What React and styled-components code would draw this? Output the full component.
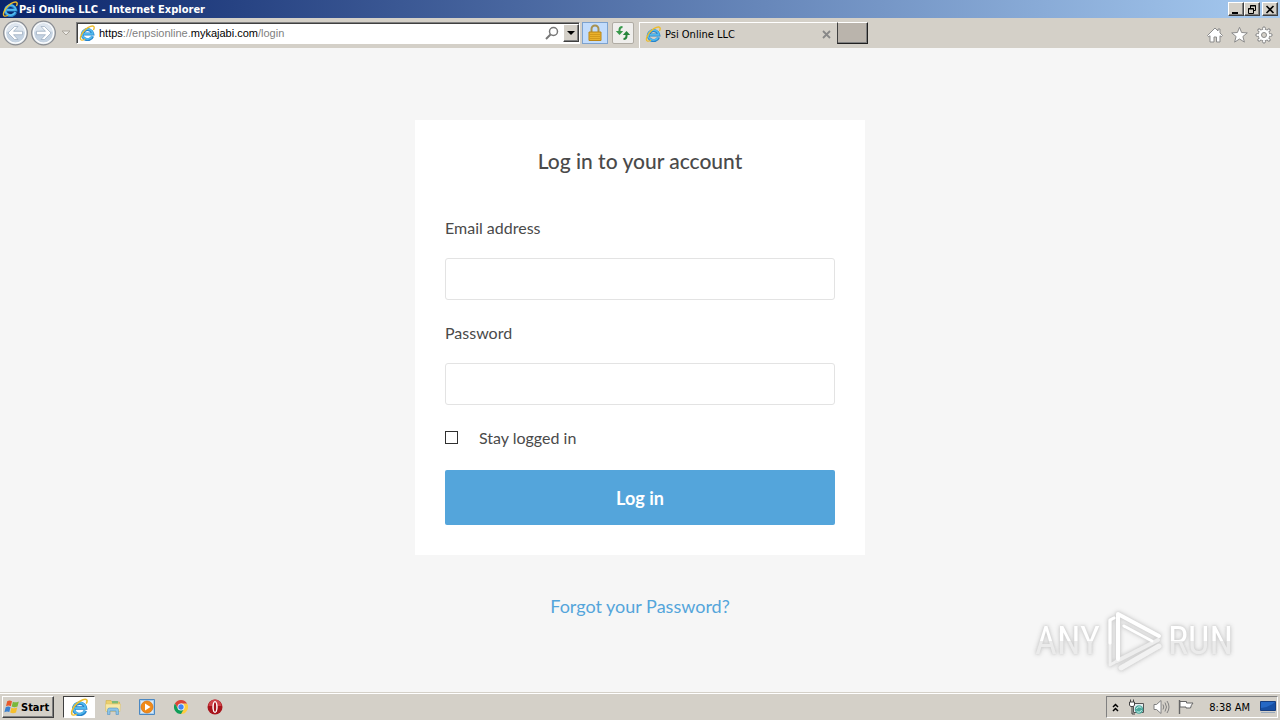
import React, { useState } from 'react';
import styled, { createGlobalStyle, css } from 'styled-components';


const GlobalStyle = createGlobalStyle`
  :root {
    --face: #d4d0c8;
    --shadow: #808080;
    --dark: #404040;
    --page: #f6f6f6;
    --text: #4a4a4a;
    --accent: #54a5db;
  }

  * {
    box-sizing: border-box;
  }

  body {
    margin: 0;
    font-family: 'DejaVu Sans Condensed', 'DejaVu Sans', sans-serif;
    font-size: 11px;
    color: #000;
  }

  button {
    font: inherit;
    color: inherit;
    padding: 0;
  }

  svg {
    display: block;
    flex: none;
  }
`

const raised = css`
  border: 1px solid;
  border-color: #fff var(--dark) var(--dark) #fff;
  box-shadow: inset -1px -1px 0 var(--shadow);
  background: var(--face);
`

const Screen = styled.div`
  min-height: 100vh;
  display: flex;
  flex-direction: column;
`

/* ---------- Window chrome ---------- */

const TitleBar = styled.header`
  height: 18px;
  padding: 0 2px;
  display: flex;
  align-items: center;
  gap: 1px;
  background: linear-gradient(90deg, #0a246a, #a6caf0);
  color: #fff;
  font-weight: bold;
`

const WindowButtons = styled.div`
  margin-left: auto;
  display: flex;

  button:last-child {
    margin-left: 2px;
  }
`

const WindowButton = styled.button`
  ${raised}
  width: 16px;
  height: 14px;
  display: flex;
  align-items: center;
  justify-content: center;
`

const Toolbar = styled.div`
  height: 30px;
  padding: 0 7px 0 3px;
  display: flex;
  align-items: center;
  background: var(--face);
`

const PlainButton = styled.button`
  border: 0;
  background: none;
  display: flex;
  align-items: center;
  justify-content: center;
`

const NavButtons = styled.div`
  display: flex;
  align-items: center;
  gap: 3px;
  margin-right: 3px;
`

const AddressBar = styled.div`
  flex: 0 1 504px;
  min-width: 0;
  height: 22px;
  padding: 1px 0 1px 2px;
  display: flex;
  align-items: center;
  gap: 4px;
  background: #fff;
  border: 1px solid;
  border-color: var(--shadow) #fff #fff var(--shadow);
  box-shadow: inset 1px 1px 0 var(--dark);
`

const Url = styled.div`
  flex: 1;
  overflow: hidden;
  font-family: 'Liberation Sans', sans-serif;
  line-height: 16px;
  white-space: nowrap;
  color: #808080;

  b {
    font-weight: normal;
    color: #000;
  }
`

const DropButton = styled.button`
  ${raised}
  width: 16px;
  height: 18px;
  display: flex;
  align-items: center;
  justify-content: center;
`

const SmallButton = styled.button`
  width: ${(props) => (props.$active ? '26px' : '22px')};
  height: 22px;
  margin-left: ${(props) => (props.$active ? '2px' : '4px')};
  border: 1px solid ${(props) => (props.$active ? '#7da2ce' : '#b0aca4')};
  border-radius: ${(props) => (props.$active ? '0' : '2px')};
  background: ${(props) => (props.$active ? '#c2dcfc' : '#efeeec')};
  display: flex;
  align-items: center;
  justify-content: center;
`

const Tab = styled.div`
  align-self: flex-end;
  width: 198px;
  height: 26px;
  margin-left: 5px;
  padding: 0 6px 3px 5px;
  display: flex;
  align-items: center;
  gap: 4px;
  border: solid #fff;
  border-width: 1px 0 0 1px;

  button {
    margin-left: auto;
  }
`

const NewTab = styled.button`
  width: 31px;
  height: 22px;
  border: 1px solid;
  border-color: #fff #202020 #202020 #404040;
  box-shadow: inset -1px -1px 0 var(--shadow);
  background: #bab4ac;
`

const Tools = styled.div`
  margin-left: auto;
  padding-top: 3px;
  display: flex;
  gap: 6px;
`

/* ---------- Login page ---------- */

const Page = styled.main`
  position: relative;
  flex: 1;
  padding: 72px 20px 40px;
  display: flex;
  flex-direction: column;
  align-items: center;
  background: var(--page);
  font-family: Lato, sans-serif;
  font-size: 16px;
  line-height: 24px;
  color: var(--text);
`

const Card = styled.form`
  width: 100%;
  max-width: 450px;
  padding: 29px 30px 30px;
  background: #fff;
`

const Heading = styled.h1`
  margin: 0 0 43px;
  font-size: 21px;
  font-weight: 500;
  line-height: 24px;
  text-align: center;
`

const Field = styled.div`
  margin-bottom: 21px;

  label {
    display: block;
    margin-bottom: 18px;
  }

  input {
    display: block;
    width: 100%;
    height: 42px;
    padding: 0 12px;
    border: 1px solid #e3e3e3;
    border-radius: 3px;
    font: inherit;
    color: inherit;
    background: #fff;
  }
`

const CheckRow = styled.label`
  margin-bottom: 20px;
  display: flex;
  align-items: center;
  gap: 21px;

  input {
    appearance: none;
    width: 13px;
    height: 13px;
    margin: 0 0 2px;
    border: 1px solid #303030;
    background: #fff;
  }

  input:checked {
    background: var(--accent);
  }
`

const Submit = styled.button`
  display: block;
  width: 100%;
  height: 55px;
  border: 0;
  border-radius: 2px;
  background: var(--accent);
  color: #fff;
  font-size: 18px;
  font-weight: bold;
`

const ForgotLink = styled.a`
  margin-top: 39px;
  font-size: 18px;
  color: var(--accent);
  text-decoration: none;
`

// Sits over the page in the corner
const Watermark = styled.div`
  position: absolute;
  right: 47px;
  bottom: 19px;
  display: flex;
  align-items: center;
  gap: 5px;
  font-family: 'Liberation Sans Narrow', 'Roboto Condensed', sans-serif;
  font-size: 38px;
  line-height: 64px;
  pointer-events: none;
  filter: drop-shadow(0 0 1px #d2d2d2) drop-shadow(0 0 2px #c8c8c8);

  span {
    color: transparent;
    background: linear-gradient(#fff 50%, #ebebeb 50%);
    background-clip: text;
  }
`

/* ---------- Taskbar ---------- */

const Taskbar = styled.footer`
  height: 28px;
  padding: 1px 2px 0;
  display: flex;
  align-items: center;
  background: var(--face);
  border-top: 1px solid var(--face);
  box-shadow: inset 0 1px 0 #fff;
`

const StartButton = styled.button`
  ${raised}
  height: 22px;
  padding: 0 4px 0 1px;
  display: flex;
  align-items: center;
  gap: 1px;
  font-weight: bold;
`

const TaskButton = styled.button`
  width: ${(props) => (props.$pressed ? '32px' : '34px')};
  height: 22px;
  display: flex;
  align-items: center;
  justify-content: center;
  border: 1px solid transparent;
  background: none;

  ${(props) => props.$pressed && css`
    margin: 0 1px 0 9px;
    background: #fff;
    border-color: var(--dark) #fff #fff var(--dark);
  `}
`

const Tray = styled.div`
  height: 22px;
  margin-left: auto;
  padding: 0 1px 0 4px;
  display: flex;
  align-items: center;
  gap: 8px;
  border: 1px solid;
  border-color: var(--shadow) #fff #fff var(--shadow);

  time {
    margin: 0 2px 0 7px;
  }
`

/* ---------- Icons ---------- */

const IeIcon = ({ size = 16 }) => (
  <svg width={size} height={size} viewBox="0 0 16 16" fill="none">
    <path d="M13.600 11.200A5.300 5 0 1 1 13.800 8.900H4.500" stroke="#2583cb" strokeWidth="3" />
    <path d="M13.300 11.200A5.300 5 0 1 1 13.800 8.900H4.500" stroke="#52b9ee" strokeWidth="1.700" />
    <path d="M2.200 15C.3 13.500 2.300 8.500 6.200 4.800C9.800 1.500 13.800.2 14.900 1.700C15.500 2.700 15 4 14.400 5" stroke="#ecbc2c" strokeWidth="1.400" />
    <path d="M2.200 15C3.300 15.600 4.600 15 6 14.200" stroke="#ecbc2c" strokeWidth="1.200" />
  </svg>
)

const ArrowIcon = ({ flip }) => (
  <svg width="25" height="26" viewBox="0 0 25 26">
    <circle cx="12.500" cy="13" r="11.800" fill="#e4eaf0" stroke="#8a8d92" strokeWidth="1.300" />
    <circle cx="12.500" cy="13" r="10" fill="#c5d3e2" stroke="#fff" strokeWidth="1.200" />
    <path d="M3.500 12a9 9 0 0 1 18 0c-5-2-13-2-18 0z" fill="#dde5ee" />
    <g transform={flip ? 'matrix(-1 0 0 1 25 0)' : undefined}>
      <path d="M5 13l6.500-6.500H15L10.500 11.300h9v3.400h-9l4.500 4.800h-3.500z" fill="#fff" stroke="#9aaabd" strokeWidth=".7" />
    </g>
  </svg>
)

const SearchIcon = () => (
  <svg width="14" height="14" viewBox="0 0 14 14" fill="none" stroke="#777">
    <circle cx="8.500" cy="5.500" r="4" strokeWidth="1.500" />
    <path d="M5.500 8.500L1 13" strokeWidth="2" />
  </svg>
)

const LockIcon = () => (
  <svg width="16" height="18" viewBox="0 0 16 18">
    <path d="M4.500 9V5a3.500 3.500 0 0 1 7 0V9" fill="none" stroke="#a8914e" strokeWidth="2" />
    <path d="M2 8h12v8.500H2z" fill="#eab12c" stroke="#b98516" />
    <path d="M3 10.500h10M3 12.500h10M3 14.500h10" stroke="#d39a1c" />
  </svg>
)

const RefreshIcon = () => (
  <svg width="16" height="16" viewBox="0 0 16 16" fill="none">
    <path d="M7.500 2Q4.500 2 4.500 5v2" stroke="#37984a" strokeWidth="2" />
    <path d="M.8 6h7.400L4.500 10z" fill="#37984a" />
    <path d="M8.500 14Q11.500 14 11.500 11V9" stroke="#26843b" strokeWidth="2" />
    <path d="M7.800 10h7.400L11.500 6z" fill="#26843b" />
  </svg>
)

const HomeIcon = () => (
  <svg width="18" height="18" viewBox="0 0 18 18" fill="#fff" stroke="#8b8b8b">
    <path d="M9 2L1.500 9.500l1.300 1.300L4 9.700V16h4v-5h2.500v5H14V9.700l1.200 1.100 1.300-1.300L14 7V3h-2v2z" />
  </svg>
)

const StarIcon = () => (
  <svg width="19" height="18" viewBox="0 0 19 18" fill="#fff" stroke="#8b8b8b">
    <path d="M9.500 1.300l2.100 5.200 5.700.4-4.400 3.600 1.500 5.600-4.900-3.100-4.900 3.100 1.500-5.600L1.700 6.900l5.700-.4z" />
  </svg>
)

const teeth = [0, 45, 90, 135, 180, 225, 270, 315]

const GearIcon = () => (
  <svg width="18" height="18" viewBox="0 0 18 18">
    {teeth.map((angle) => (
      <path key={angle} d="M7.500 4L8 1h2l.5 3z" fill="#fff" stroke="#8b8b8b" transform={`rotate(${angle} 9 9)`} />
    ))}
    <circle cx="9" cy="9" r="5.800" fill="#fff" stroke="#8b8b8b" strokeWidth=".8" />
    {teeth.map((angle) => (
      <path key={angle} d="M8.200 2h1.600v3H8.200z" fill="#fff" transform={`rotate(${angle} 9 9)`} />
    ))}
    <circle cx="9" cy="9" r="2.500" fill="#d4d0c8" stroke="#8b8b8b" />
  </svg>
)

const WindowsIcon = () => (
  <svg width="16" height="16" viewBox="0 0 16 16">
    <path d="M3.200 2.200Q5.500.8 8 2.200L6.800 7.200Q4.500 6 2 7.300z" fill="#e8592b" />
    <path d="M8.900 2.700Q11.500 4 14.800 2.400L13.500 7.500Q10.500 9 7.700 7.600z" fill="#7ab83a" />
    <path d="M1.700 8.300Q4.200 7 6.500 8.200L5.300 13Q3 11.900.4 13.200z" fill="#3a80d0" />
    <path d="M7.400 8.700Q10.200 10 13.200 8.600L12 13.500Q9 15 6.200 13.500z" fill="#f6bf2c" />
  </svg>
)

const FolderIcon = () => (
  <svg width="18" height="18" viewBox="0 0 18 18">
    <path d="M2 2.500h5l1 1.500h7.500V13H2z" fill="#ecd06c" stroke="#cfae4a" strokeWidth=".6" />
    <path d="M8 3h6v2.500H8z" fill="#7dbb77" />
    <path d="M1.500 6h15L16 13.500H2z" fill="#f8e9a6" stroke="#d9bf66" strokeWidth=".5" />
    <path d="M3.500 16.500V12q0-2 2-2h7q2 0 2 2v4.500H12V13H6v3.500z" fill="#8cc4e6" stroke="#5592c2" strokeWidth=".6" />
  </svg>
)

const PlayerIcon = () => (
  <svg width="18" height="18" viewBox="0 0 18 18">
    <path d="M1.500 1.500h15v15h-15z" fill="#a8cff0" stroke="#4b88c2" />
    <path d="M3 3h12v12H3z" fill="#d9ebfa" />
    <circle cx="9" cy="9" r="6" fill="#f08a18" stroke="#d56f0a" strokeWidth=".7" />
    <path d="M7 5.500l5.500 3.500L7 12.500z" fill="#fff" />
  </svg>
)

const ChromeIcon = () => (
  <svg width="14" height="14" viewBox="0 0 16 16">
    <path d="M8 8L14.930 4A8 8 0 0 1 8 16z" fill="#ffcd40" />
    <path d="M8 4h6.930L11.500 10z" fill="#ffcd40" />
    <path d="M8 4h6.930A8 8 0 0 0 1.070 4l3.500 6z" fill="#db4437" />
    <path d="M1.070 4A8 8 0 0 0 8 16l3.460-6H4.540z" fill="#0f9d58" />
    <circle cx="8" cy="8" r="4" fill="#fff" />
    <circle cx="8" cy="8" r="3.100" fill="#4285f4" />
  </svg>
)

const OperaIcon = () => (
  <svg width="16" height="16" viewBox="0 0 16 16">
    <circle cx="8" cy="8" r="7.500" fill="#a8141c" />
    <path d="M1.500 7a6.500 6.500 0 0 1 13 0z" fill="#cf444a" />
    <ellipse cx="8" cy="8" rx="2.700" ry="6" fill="#fff" />
    <ellipse cx="8" cy="8" rx="1.200" ry="4.800" fill="#a8141c" />
  </svg>
)

const NetworkIcon = () => (
  <svg width="17" height="17" viewBox="0 0 17 17">
    <path d="M5.500 4.500h10v9h-10z" fill="#e7edf0" stroke="#555" />
    <circle cx="11" cy="10.500" r="4.200" fill="#48a79c" />
    <path d="M8.500 10a2.800 2.800 0 0 1 5-1M13.500 11a2.800 2.800 0 0 1-5 1" fill="none" stroke="#d5f4ec" />
    <path d="M1.500 3h5v3l-1 1.500h-3L1.500 6z" fill="#fff" stroke="#444" />
    <path d="M2.500.5V3M5.500.5V3M4 7.500V15h3" fill="none" stroke="#444" />
  </svg>
)

const SpeakerIcon = () => (
  <svg width="17" height="16" viewBox="0 0 17 16" fill="none" stroke="#808080">
    <path d="M1 5.500h2.500L8 1.500v13l-4.500-4H1z" fill="#fff" />
    <path d="M10 5.500q1.500 2.500 0 5M12 3.500q3 4.500 0 9M14 2q4 6 0 12" />
  </svg>
)

const FlagIcon = () => (
  <svg width="16" height="16" viewBox="0 0 16 16" fill="#fff" stroke="#666">
    <path d="M1.500 1v14" strokeWidth="1.400" />
    <path d="M2 2.500h6.500v1.500H15q-2 2-2.500 5H8V8H2z" />
  </svg>
)

const DesktopIcon = () => (
  <svg width="16" height="14" viewBox="0 0 16 14">
    <path d="M.5 1.500h15v9H.5z" fill="#2568c5" stroke="#163e80" />
    <path d="M1 8Q8 8 15 2v8H1z" fill="#174fa3" />
    <path d="M1 12.500h14" stroke="#99a9bb" />
  </svg>
)

const CaretIcon = ({ color = '#000' }) => (
  <svg width="8" height="4" viewBox="0 0 8 4">
    <path d="M0 0h8L4 4z" fill={color} />
  </svg>
)

const PlayLogo = () => (
  <svg width="58" height="64" viewBox="0 0 58 64" fill="none" strokeLinecap="round" strokeLinejoin="round">
    <path d="M9 9L5 11V56L12 52" stroke="#f0f0f0" strokeWidth="3" />
    <path d="M9 9L5 11V34" stroke="#fff" strokeWidth="3" />
    <path d="M12 52L53 31" stroke="#ededed" strokeWidth="4" />
    <path d="M16 59L54 37" stroke="#f2f2f2" strokeWidth="5" />
    <path d="M13 50V5L54 27" stroke="#fff" strokeWidth="4" />
    <path d="M19 17L47 32" stroke="#fff" strokeWidth="3" />
  </svg>
)

const Login = () => {

  const [stay, setStay] = useState(false)

  return (
    <Page>
      <Card onSubmit={(event) => event.preventDefault()}>
        <Heading>Log in to your account</Heading>
        <Field>
          <label htmlFor="email">Email address</label>
          <input id="email" type="email" />
        </Field>
        <Field>
          <label htmlFor="password">Password</label>
          <input id="password" type="password" />
        </Field>
        <CheckRow>
          <input type="checkbox" checked={stay} onChange={() => setStay(!stay)} />
          Stay logged in
        </CheckRow>
        <Submit type="submit">Log in</Submit>
      </Card>
      <ForgotLink href="#forgot">Forgot your Password?</ForgotLink>
      <Watermark>
        <span>ANY</span>
        <PlayLogo />
        <span>RUN</span>
      </Watermark>
    </Page>
  )
}

const App = () => {
  return (
    <Screen>
      <GlobalStyle />
      <TitleBar>
        <IeIcon />
        <span>Psi Online LLC - Internet Explorer</span>
        <WindowButtons>
          <WindowButton aria-label="Minimize">
            <svg width="10" height="9" viewBox="0 0 10 9"><path d="M1 7h6v2H1z" /></svg>
          </WindowButton>
          <WindowButton aria-label="Restore">
            <svg width="10" height="9" viewBox="0 0 10 9" fill="none" stroke="#000">
              <path d="M3.500 3V.5h5v5H7M3 1h6M1.500 3.500h5v5h-5zM1 4h6" />
            </svg>
          </WindowButton>
          <WindowButton aria-label="Close">
            <svg width="10" height="9" viewBox="0 0 10 9"><path d="M1.500 1l7 7M8.500 1l-7 7" stroke="#000" strokeWidth="1.600" /></svg>
          </WindowButton>
        </WindowButtons>
      </TitleBar>

      <Toolbar>
        <NavButtons>
          <PlainButton aria-label="Back"><ArrowIcon /></PlainButton>
          <PlainButton aria-label="Forward"><ArrowIcon flip /></PlainButton>
          <PlainButton aria-label="Recent pages">
            <svg width="14" height="8" viewBox="0 0 14 8"><path d="M3 2h8L7 6z" fill="#eceae6" stroke="#aaa59c" /></svg>
          </PlainButton>
        </NavButtons>
        <AddressBar>
          <IeIcon />
          <Url><b>https</b>://enpsionline.<b>mykajabi.com</b>/login</Url>
          <PlainButton aria-label="Search"><SearchIcon /></PlainButton>
          <DropButton aria-label="Show addresses"><CaretIcon /></DropButton>
        </AddressBar>
        <SmallButton $active aria-label="Security report"><LockIcon /></SmallButton>
        <SmallButton aria-label="Refresh"><RefreshIcon /></SmallButton>
        <Tab>
          <IeIcon />
          <span>Psi Online LLC</span>
          <PlainButton aria-label="Close tab">
            <svg width="9" height="9" viewBox="0 0 9 9"><path d="M1 1l7 7M8 1L1 8" stroke="#888" strokeWidth="1.800" /></svg>
          </PlainButton>
        </Tab>
        <NewTab aria-label="New tab" />
        <Tools>
          <PlainButton aria-label="Home"><HomeIcon /></PlainButton>
          <PlainButton aria-label="Favorites"><StarIcon /></PlainButton>
          <PlainButton aria-label="Tools"><GearIcon /></PlainButton>
        </Tools>
      </Toolbar>

      <Login />

      <Taskbar>
        <StartButton><WindowsIcon />Start</StartButton>
        <TaskButton $pressed aria-label="Internet Explorer"><IeIcon size={18} /></TaskButton>
        <TaskButton aria-label="Explorer"><FolderIcon /></TaskButton>
        <TaskButton aria-label="Media Player"><PlayerIcon /></TaskButton>
        <TaskButton aria-label="Chrome"><ChromeIcon /></TaskButton>
        <TaskButton aria-label="Opera"><OperaIcon /></TaskButton>
        <Tray>
          <PlainButton aria-label="Show hidden icons">
            <svg width="9" height="11" viewBox="0 0 9 11" fill="none" stroke="#000" strokeWidth="1.500">
              <path d="M2 5l2.500-2.500L7 5M2 9l2.500-2.500L7 9" />
            </svg>
          </PlainButton>
          <NetworkIcon />
          <SpeakerIcon />
          <FlagIcon />
          <time>8:38 AM</time>
          <DesktopIcon />
        </Tray>
      </Taskbar>
    </Screen>
  )
}

export default App
